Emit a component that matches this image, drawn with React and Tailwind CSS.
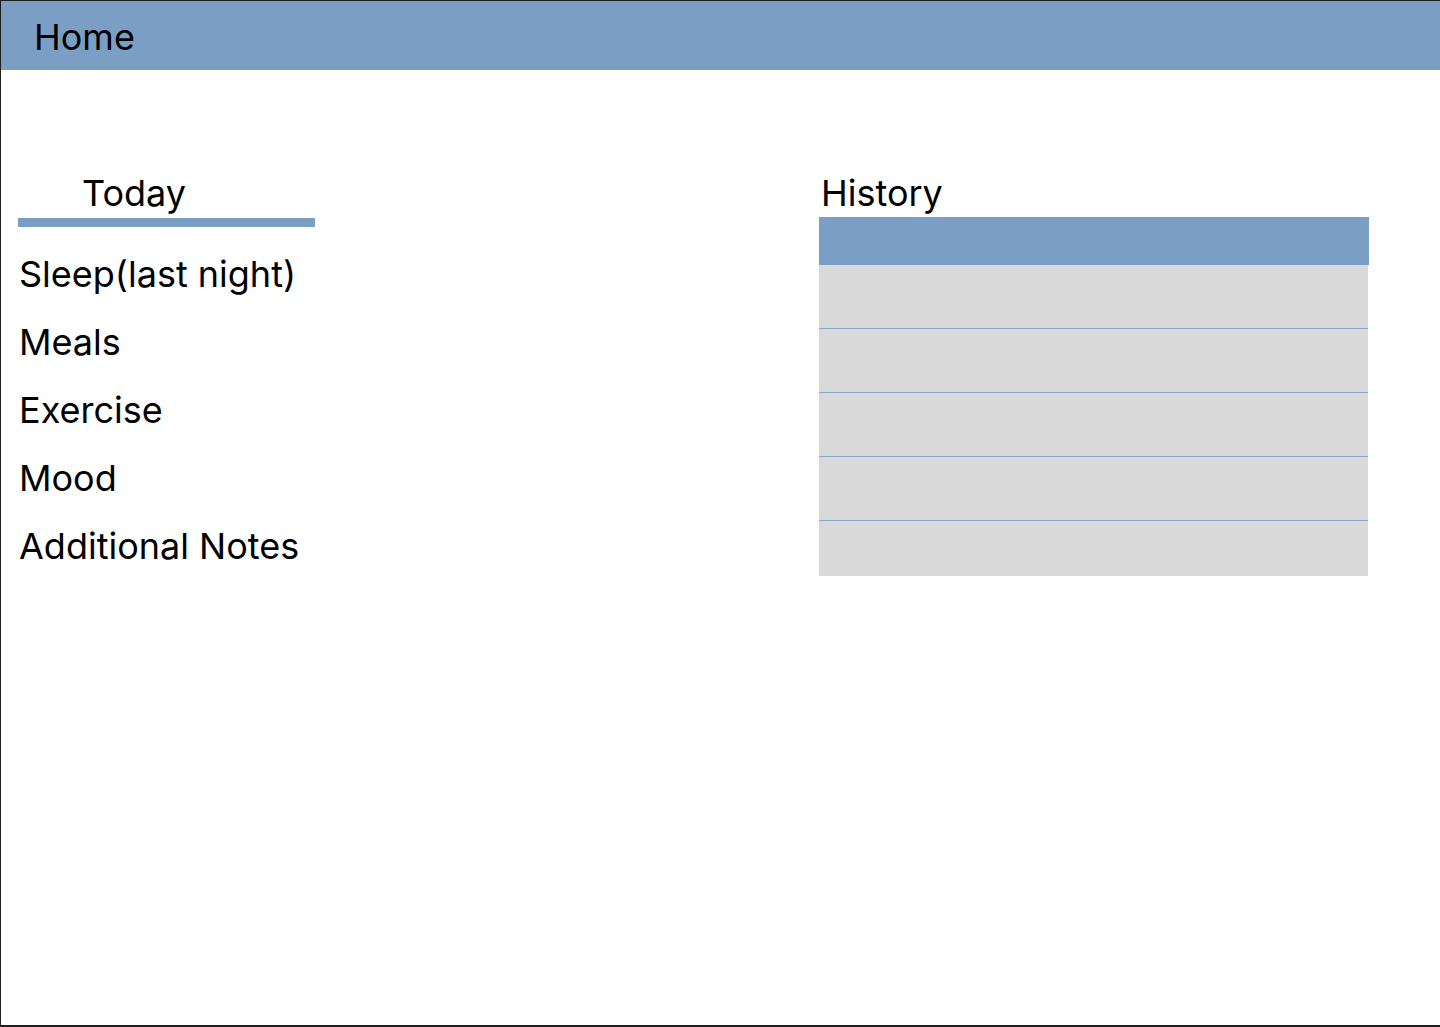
import React from "react";

const fields = ["Sleep(last night)", "Meals", "Exercise", "Mood", "Additional Notes"];
const historyRows = [0, 1, 2, 3, 4];

const App = () => {
  return (
    <div
      className="w-[1440px] h-[1027px] bg-white border-l border-t border-b-2 border-[#1e1e1e] overflow-hidden text-black"
      style={{ fontFamily: "Inter, 'Noto Sans', sans-serif" }}
    >
      {/* Header */}
      <div className="h-[69px] bg-[#7b9ec5] flex items-center pl-[33px]">
        <span className="text-[36px] leading-none mt-[2px]">Home</span>
      </div>

      <div className="flex pt-[103px]">
        {/* Today */}
        <div className="w-[297px] ml-[17px]">
          <div className="pl-[64px] text-[36px] leading-[40px] h-[44px]">Today</div>
          <div className="h-[9px] bg-[#7b9ec5] mt-[1px]" />
          <div className="flex flex-col gap-[28px] mt-[27px] pl-[1px]">
            {fields.map((f) => (
              <div key={f} className="text-[36px] leading-[40px]">{f}</div>
            ))}
          </div>
        </div>

        {/* History */}
        <div className="ml-[504px] w-[550px]">
          <div className="pl-[2px] text-[36px] leading-[40px] h-[44px]">History</div>
          <div className="h-[48px] bg-[#7b9ec5]" />
          <div className="w-[549px] bg-[#d9d9d9]">
            {historyRows.map((r) => (
              <div
                key={r}
                className={r < 4 ? "h-[64px] border-b border-[#8aa5cf]" : "h-[55px]"}
              />
            ))}
          </div>
        </div>
      </div>
    </div>
  );
};

export default App;
